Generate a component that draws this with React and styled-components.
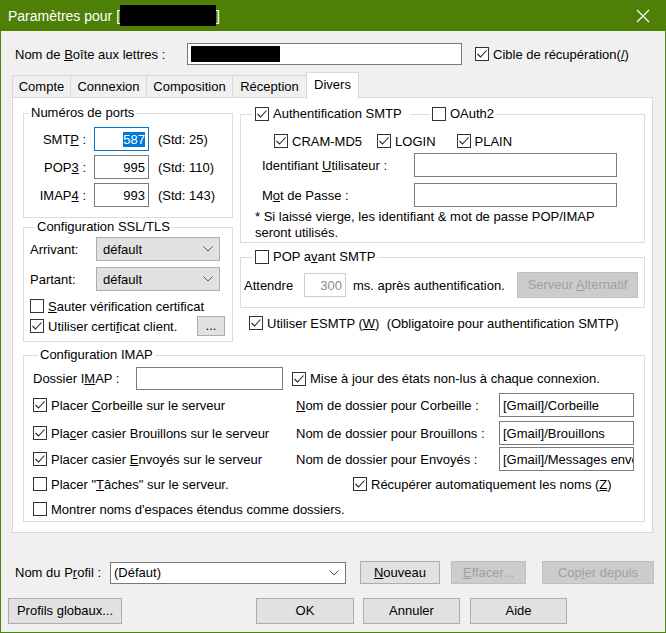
import React from "react";
import styled, { createGlobalStyle } from "styled-components";

const Global = createGlobalStyle`
  html, body {
    margin: 0;
    padding: 0;
    background: #f0f0f0;
  }
  body {
    font-family: "Liberation Sans", Arial, sans-serif;
    font-size: 13px;
    color: #000;
  }
  * { box-sizing: border-box; }
`;

const Window = styled.div`
  width: 666px;
  height: 633px;
  background: #f0f0f0;
  border: 1px solid #4f8410;
  border-top: none;
  display: flex;
  flex-direction: column;
`;

const TitleBar = styled.div`
  height: 31px;
  margin: 0 -1px;
  background: #4e8008;
  color: #fff;
  display: flex;
  align-items: center;
  padding-left: 8px;
  font-size: 14px;
  flex-shrink: 0;
  .close {
    margin-left: auto;
    width: 46px;
    height: 31px;
    display: flex;
    align-items: center;
    justify-content: center;
  }
`;

const Redact = styled.span`
  display: inline-block;
  background: #000;
  width: ${(p) => p.w}px;
  height: ${(p) => p.h}px;
  margin: ${(p) => p.m || "0"};
`;

const Row = styled.div`
  display: flex;
  align-items: center;
  height: ${(p) => p.h || 22}px;
  margin: ${(p) => p.m || "0"};
  flex-shrink: 0;
`;

const Label = styled.span`
  display: inline-block;
  width: ${(p) => (p.w ? p.w + "px" : "auto")};
  text-align: ${(p) => (p.right ? "right" : "left")};
  padding-right: ${(p) => (p.right ? 8 : 0)}px;
  margin-left: ${(p) => p.ml || 0}px;
  white-space: nowrap;
  flex-shrink: 0;
`;

const TextBox = styled.div`
  width: ${(p) => p.w}px;
  height: ${(p) => p.h || 24}px;
  background: #fff;
  border: 1px solid ${(p) => (p.focus ? "#0078d7" : p.disabled ? "#cccccc" : "#7a7a7a")};
  color: ${(p) => (p.disabled ? "#8d8d8d" : "#000")};
  margin-left: ${(p) => p.ml || 0}px;
  display: flex;
  align-items: center;
  justify-content: ${(p) => (p.right ? "flex-end" : "flex-start")};
  padding: 0 3px;
  white-space: nowrap;
  overflow: hidden;
  flex-shrink: 0;
  .sel {
    background: #0078d7;
    color: #fff;
  }
`;

const Select = styled.div`
  width: ${(p) => p.w}px;
  height: ${(p) => p.h || 24}px;
  background: ${(p) => (p.white ? "#fff" : "#e1e1e1")};
  border: 1px solid ${(p) => (p.white ? "#7a7a7a" : "#adadad")};
  margin-left: ${(p) => p.ml || 0}px;
  display: flex;
  align-items: center;
  padding: 0 6px 0 ${(p) => (p.white ? 3 : 6)}px;
  flex-shrink: 0;
  span { flex: 1; }
`;

const Button = styled.div`
  width: ${(p) => p.w}px;
  height: ${(p) => p.h || 23}px;
  line-height: ${(p) => (p.h || 23) - 2}px;
  margin-left: ${(p) => (p.auto ? "auto" : (p.ml || 0) + "px")};
  margin-right: ${(p) => p.mr || 0}px;
  background: ${(p) => (p.disabled ? "#cccccc" : "#e1e1e1")};
  border: 1px solid ${(p) => (p.disabled ? "#bfbfbf" : "#adadad")};
  color: ${(p) => (p.disabled ? "#a0a0a0" : "#000")};
  text-align: center;
  white-space: nowrap;
  flex-shrink: 0;
`;

const Box = styled.span`
  width: 14px;
  height: 14px;
  border: 1px solid #333;
  background: #fff;
  display: inline-flex;
  align-items: center;
  justify-content: center;
  flex-shrink: 0;
`;

const CheckWrap = styled.span`
  display: inline-flex;
  align-items: center;
  gap: 4px;
  white-space: nowrap;
  margin-left: ${(p) => p.ml || 0}px;
  width: ${(p) => (p.w ? p.w + "px" : "auto")};
  flex-shrink: 0;
`;

const Check = ({ checked, children, ml, w }) => (
  <CheckWrap ml={ml} w={w}>
    <Box>
      {checked && (
        <svg width="12" height="12" viewBox="0 0 12 12">
          <path d="M1.5 6 L4.5 9 L10.5 2.5" fill="none" stroke="#222" strokeWidth="1.1" />
        </svg>
      )}
    </Box>
    <span>{children}</span>
  </CheckWrap>
);

const Chevron = () => (
  <svg width="10" height="6" viewBox="0 0 10 6">
    <path d="M0.5 0.5 L5 5 L9.5 0.5" fill="none" stroke="#555" strokeWidth="1" />
  </svg>
);

const Tabs = styled.div`
  display: flex;
  align-items: flex-end;
  height: 26px;
  margin: 7px 0 0 11px;
  position: relative;
  z-index: 1;
  flex-shrink: 0;
`;

const Tab = styled.div`
  width: ${(p) => p.w}px;
  height: ${(p) => (p.active ? 27 : 23)}px;
  margin-bottom: ${(p) => (p.active ? -1 : 0)}px;
  margin-left: -1px;
  background: ${(p) => (p.active ? "#fff" : "#f0f0f0")};
  border: 1px solid #d9d9d9;
  border-bottom: ${(p) => (p.active ? "none" : "1px solid #d9d9d9")};
  display: flex;
  align-items: ${(p) => (p.active ? "flex-start" : "center")};
  padding-top: ${(p) => (p.active ? 4 : 0)}px;
  justify-content: center;
  &:first-child { margin-left: 0; }
`;

const Panel = styled.div`
  width: 641px;
  height: 436px;
  margin-left: 11px;
  margin-top: -1px;
  background: #fff;
  border: 1px solid #d9d9d9;
  padding: 7px 7px 0 10px;
  flex-shrink: 0;
`;

const Columns = styled.div`
  display: flex;
  gap: 7px;
`;

const Col = styled.div`
  display: flex;
  flex-direction: column;
  width: ${(p) => p.w}px;
`;

const Group = styled.fieldset`
  margin: ${(p) => p.m || "0"};
  padding: ${(p) => p.pad || "0"};
  height: ${(p) => p.h}px;
  width: ${(p) => (p.w ? p.w + "px" : "auto")};
  border: 1px solid #dcdcdc;
  min-inline-size: 0;
  display: flex;
  flex-direction: column;
`;

const Legend = styled.legend`
  margin-left: ${(p) => p.ml || 5}px;
  padding: 0 2px;
  line-height: 16px;
  height: 16px;
  display: flex;
  align-items: center;
`;

const LegendLine = styled.span`
  width: ${(p) => p.w}px;
  height: 1px;
  background: #dcdcdc;
  margin: 0 2px 0 0;
`;

const Note = styled.div`
  line-height: 16px;
  margin: 2px 0 0 14px;
`;

const Footer = styled.div`
  display: flex;
  flex-direction: column;
`;

export default function App() {
  return (
    <>
      <Global />
      <Window>
        <TitleBar>
          Paramètres pour [<Redact w={96} h={21} />]
          <div className="close">
            <svg width="14" height="14" viewBox="0 0 14 14">
              <path d="M1 1 L13 13 M13 1 L1 13" stroke="#fff" strokeWidth="1.2" />
            </svg>
          </div>
        </TitleBar>

        <Row h={22} m="12px 0 0 14px">
          <Label w={172}>
            Nom de <u>B</u>oîte aux lettres :
          </Label>
          <TextBox w={275} h={22}>
            <Redact w={89} h={16} />
          </TextBox>
          <Check checked ml={13}>
            Cible de récupération(<u>/</u>)
          </Check>
        </Row>

        <Tabs>
          <Tab w={59}>Compte</Tab>
          <Tab w={77}>Connexion</Tab>
          <Tab w={87}>Composition</Tab>
          <Tab w={75}>Réception</Tab>
          <Tab w={53} active>
            Divers
          </Tab>
        </Tabs>

        <Panel>
          <Columns>
            <Col w={210}>
              <Group h={113} pad="6px 0 0 0">
                <Legend ml={5}>Numéros de ports</Legend>
                <Row h={24}>
                  <Label w={70} right>
                    SMT<u>P</u> :
                  </Label>
                  <TextBox w={55} focus right>
                    <span className="sel">587</span>
                  </TextBox>
                  <Label ml={9}>(Std: 25)</Label>
                </Row>
                <Row h={24} m="4px 0 0 0">
                  <Label w={70} right>
                    POP<u>3</u> :
                  </Label>
                  <TextBox w={55} right>
                    995
                  </TextBox>
                  <Label ml={9}>(Std: 110)</Label>
                </Row>
                <Row h={24} m="4px 0 0 0">
                  <Label w={70} right>
                    IMAP<u>4</u> :
                  </Label>
                  <TextBox w={55} right>
                    993
                  </TextBox>
                  <Label ml={9}>(Std: 143)</Label>
                </Row>
              </Group>

              <Group h={123} m="1px 0 0 0" pad="2px 7px 0 6px">
                <Legend ml={5}>Configuration SSL/TLS</Legend>
                <Row h={24}>
                  <Label w={66}>Arrivant:</Label>
                  <Select w={124}>
                    <span>défault</span>
                    <Chevron />
                  </Select>
                </Row>
                <Row h={24} m="6px 0 0 0">
                  <Label w={66}>Partant:</Label>
                  <Select w={124}>
                    <span>défault</span>
                    <Chevron />
                  </Select>
                </Row>
                <Row h={16} m="7px 0 0 0">
                  <Check>
                    <u>S</u>auter vérification certificat
                  </Check>
                </Row>
                <Row h={20} m="2px 0 0 0">
                  <Check checked>
                    Utiliser certi<u>f</u>icat client.
                  </Check>
                  <Button w={28} h={20} auto>
                    ...
                  </Button>
                </Row>
              </Group>
            </Col>

            <Col w={405}>
              <Group h={137} m="1px 0 0 0" pad="11px 0 0 0">
                <Legend ml={12}>
                  <Check checked w={155}>
                    Authentification SMTP
                  </Check>
                  <LegendLine w={20} />
                  <Check>OAuth2</Check>
                </Legend>
                <Row h={16}>
                  <Check checked ml={33}>
                    CRAM-MD5
                  </Check>
                  <Check checked ml={15}>
                    LOGIN
                  </Check>
                  <Check checked ml={21}>
                    PLAIN
                  </Check>
                </Row>
                <Row h={24} m="4px 0 0 0">
                  <Label w={152} ml={21}>
                    Identifiant <u>U</u>tilisateur :
                  </Label>
                  <TextBox w={203} />
                </Row>
                <Row h={24} m="6px 0 0 0">
                  <Label w={152} ml={21}>
                    M<u>o</u>t de Passe :
                  </Label>
                  <TextBox w={203} />
                </Row>
                <Note>
                  * Si laissé vierge, les identifiant &amp; mot de passe POP/IMAP
                  <br />
                  seront utilisés.
                </Note>
              </Group>

              <Group h={59} m="6px 0 0 0" pad="7px 0 0 3px">
                <Legend ml={9}>
                  <Check>
                    POP a<u>v</u>ant SMTP
                  </Check>
                </Legend>
                <Row h={26}>
                  <Label w={60}>Attendre</Label>
                  <TextBox w={42} disabled right>
                    300
                  </TextBox>
                  <Label ml={7}>ms. après authentification.</Label>
                  <Button w={121} h={26} disabled auto mr={6}>
                    Serveur <u>A</u>lternatif
                  </Button>
                </Row>
              </Group>

              <Row h={16} m="7px 0 0 9px">
                <Check checked>
                  Utiliser ESMTP (<u>W</u>) &nbsp;(Obligatoire pour authentification SMTP)
                </Check>
              </Row>
            </Col>
          </Columns>

          <Group h={175} w={622} m="5px 0 0 0" pad="4px 0 0 9px">
            <Legend ml={5}>Configuration IMAP</Legend>
            <Row h={23}>
              <Label w={103}>
                Dossier I<u>M</u>AP :
              </Label>
              <TextBox w={147} h={23} />
              <Check checked ml={9}>
                Mise à jour des états non-lus à chaque connexion.
              </Check>
            </Row>
            <Row h={24} m="3px 0 0 0">
              <Check checked w={263}>
                Placer <u>C</u>orbeille sur le serveur
              </Check>
              <Label w={203}>
                <u>N</u>om de dossier pour Corbeille :
              </Label>
              <TextBox w={135}>[Gmail]/Corbeille</TextBox>
            </Row>
            <Row h={24} m="4px 0 0 0">
              <Check checked w={263}>
                Pla<u>c</u>er casier Brouillons sur le serveur
              </Check>
              <Label w={203}>Nom de dossier pour Brouillons :</Label>
              <TextBox w={135}>[Gmail]/Brouillons</TextBox>
            </Row>
            <Row h={24} m="2px 0 0 0">
              <Check checked w={263}>
                Placer casier <u>E</u>nvoyés sur le serveur
              </Check>
              <Label w={203}>Nom de dossier pour Envoyés :</Label>
              <TextBox w={135}>[Gmail]/Messages envoyés</TextBox>
            </Row>
            <Row h={18} m="4px 0 0 0">
              <Check w={320}>
                Placer "<u>T</u>âches" sur le serveur.
              </Check>
              <Check checked>
                Récupérer automatiquement les noms (<u>Z</u>)
              </Check>
            </Row>
            <Row h={16} m="8px 0 0 0">
              <Check>Montrer noms d'espaces étendus comme dossiers.</Check>
            </Row>
          </Group>
        </Panel>

        <Footer>
          <Row h={23} m="28px 0 0 14px">
            <Label w={95}>
              Nom du P<u>r</u>ofil :
            </Label>
            <Select w={236} h={22} white>
              <span>(Défaut)</span>
              <Chevron />
            </Select>
            <Button w={80} ml={14}>
              <u>N</u>ouveau
            </Button>
            <Button w={75} ml={11} disabled>
              <u>E</u>ffacer...
            </Button>
            <Button w={112} ml={16} disabled>
              Cop<u>i</u>er depuis
            </Button>
          </Row>
          <Row h={26} m="14px 0 0 7px">
            <Button w={114} h={26}>
              Profils <u>g</u>lobaux...
            </Button>
            <Button w={98} h={26} ml={134}>
              OK
            </Button>
            <Button w={97} h={26} ml={9}>
              Annuler
            </Button>
            <Button w={97} h={26} ml={10}>
              Aide
            </Button>
          </Row>
        </Footer>
      </Window>
    </>
  );
}
